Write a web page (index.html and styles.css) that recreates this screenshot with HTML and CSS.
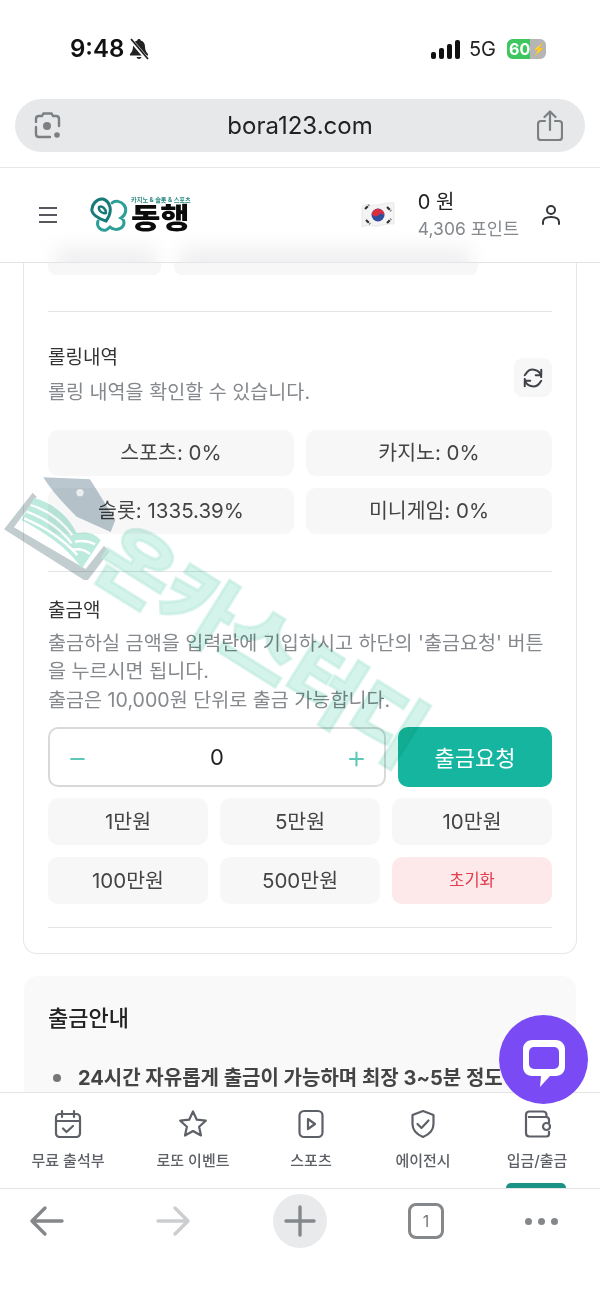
FILE: index.html
```html
<!DOCTYPE html>
<html lang="ko">
<head>
  <meta charset="UTF-8">
  <meta name="viewport" content="width=device-width, initial-scale=1.0">
  <title>동행 - 출금</title>
  <link rel="stylesheet" href="styles.css">
</head>
<body>
  <div class="phone">
    <div class="status-bar">
      <div class="status-left">
        <span class="clock">9:48</span>
        <svg class="bell" width="22" height="24" viewBox="0 0 22 24"><path d="M11 2c-1 0-1.600.7-1.700 1.600C6.500 4.400 5 6.700 5 9.500c0 3.500-1 5.500-3 7.500v1.500h18V17c-2-2-3-4-3-7.500 0-2.800-1.500-5.100-4.300-5.900C12.600 2.700 12 2 11 2zM8.500 20a2.600 2.600 0 0 0 5 0z" fill="#222"/><path d="M2 2l18 21" stroke="#fff" stroke-width="4"/><path d="M3 2l17 20" stroke="#222" stroke-width="1.800"/></svg>
      </div>
      <div class="status-right">
        <div class="signal"><i class="s1"></i><i class="s2"></i><i class="s3"></i><i class="s4"></i></div>
        <span class="net">5G</span>
        <div class="battery"><span class="battery-fill">60</span><span class="battery-rest">⚡</span></div>
      </div>
    </div>

    <div class="url-wrap">
      <div class="url-pill">
        <svg width="30" height="30" viewBox="0 0 30 30" fill="none" stroke="#7d8083" stroke-width="2.400" stroke-linecap="round"><path d="M3 11V8c0-2 1-3 3-3h3l1.500-2.500h8L20 5h3c2 0 3 1 3 3v7"/><path d="M3 16v7c0 2 1 3 3 3h11"/><circle cx="14" cy="15" r="4" fill="#7d8083" stroke="none"/><circle cx="24" cy="24" r="2.800" fill="#7d8083" stroke="none"/></svg>
        <span class="url-text">bora123.com</span>
        <svg width="26" height="32" viewBox="0 0 26 32" fill="none" stroke="#7d8083" stroke-width="2.200" stroke-linecap="round" stroke-linejoin="round"><path d="M8 11H4c-1.500 0-3 1-3 3v13c0 2 1.500 3 3 3h18c1.500 0 3-1 3-3V14c0-2-1.500-3-3-3h-4"/><path d="M13 20V2M7.500 7L13 1.500 18.500 7"/></svg>
      </div>
    </div>

    <header class="site-header">
      <div class="header-blur blur-a"></div>
      <div class="header-blur blur-b"></div>
      <div class="menu-btn"><i></i><i></i><i></i></div>
      <div class="logo">
        <svg class="logo-mark" width="38" height="36" viewBox="0 0 38 36" fill="none"><path d="M8 24c-2 6 3 10 8 9 2-1 3-2 4-3 3 3 8 3 11 1 4-3 4-8 0-10 5-3 6-9 3-13-3-4-9-5-12-2" stroke="#2c9f99" stroke-width="3" stroke-linecap="round"/><path d="M13 2c3 1 6 4 7 8 1 5-1 10-4 14C10 22 3 19 2 14 1 8 7 1 13 2z" stroke="#157a78" stroke-width="3" fill="#fff"/><path d="M9 10c3-2 7 2 7 6-3 1-8-2-7-6z" stroke="#157a78" stroke-width="2.400"/></svg>
        <div class="logo-words">
          <span class="logo-small">카지노 &amp; 슬롯 &amp; 스포츠</span>
          <span class="logo-big">동행</span>
        </div>
      </div>
      <div class="header-right">
        <svg class="flag" width="34" height="28" viewBox="0 0 34 28"><path d="M1 5c6-3 11 0 16-1s10-3 16-2v21c-6-1-11 1-16 2s-10-2-16 1z" fill="#f4f4f4" stroke="#ddd" stroke-width=".6"/><circle cx="17" cy="14" r="6.500" fill="#2f4e9e"/><path d="M10.600 13c1-4 5-6 8-5s5 3 4.500 6c-2-2-4-2-5.500 0s-5 2-7-1z" fill="#d8303f"/><g stroke="#333" stroke-width="2.200" stroke-dasharray="4 1"><path d="M4 8l4-4M26 6l4 4M5 19l4 4M26 22l4-4"/></g></svg>
        <div class="balance">
          <span class="money">0 원</span>
          <span class="points">4,306 포인트</span>
        </div>
        <svg class="user" width="20" height="22" viewBox="0 0 20 22" fill="none" stroke="#33363a" stroke-width="2"><circle cx="10" cy="6" r="4"/><path d="M2 20v-2c0-3 3-5 8-5s8 2 8 5v2" stroke-linecap="round"/></svg>
      </div>
    </header>

    <main class="content">
      <section class="card">
        <div class="stub-row">
          <div class="stub stub-a"></div>
          <div class="stub stub-b"></div>
        </div>
        <hr class="rule first-rule">

        <div class="rolling-head">
          <div>
            <h3 class="label">롤링내역</h3>
            <p class="muted">롤링 내역을 확인할 수 있습니다.</p>
          </div>
          <button class="refresh">
            <svg width="22" height="22" viewBox="0 0 24 24" fill="none" stroke="#3f4347" stroke-width="2.200" stroke-linecap="round" stroke-linejoin="round"><path d="M21 11a9 9 0 0 0-16.500-4L3 9"/><path d="M21 3v6h-6" /><path d="M3 13a9 9 0 0 0 16.500 4l1.500-2"/><path d="M3 21v-6h6"/></svg>
          </button>
        </div>
        <div class="rolling-grid">
          <div class="chip">스포츠: 0%</div>
          <div class="chip">카지노: 0%</div>
          <div class="chip">슬롯: 1335.39%</div>
          <div class="chip">미니게임: 0%</div>
        </div>
        <hr class="rule second-rule">

        <h3 class="label">출금액</h3>
        <p class="muted amount-note">출금하실 금액을 입력란에 기입하시고 하단의 '출금요청' 버튼을 누르시면 됩니다.<br>출금은 10,000원 단위로 출금 가능합니다.</p>
        <div class="amount-row">
          <div class="stepper">
            <span class="step">−</span>
            <span class="amount">0</span>
            <span class="step">+</span>
          </div>
          <button class="submit">출금요청</button>
        </div>
        <div class="quick-grid">
          <button class="quick">1만원</button>
          <button class="quick">5만원</button>
          <button class="quick">10만원</button>
          <button class="quick">100만원</button>
          <button class="quick">500만원</button>
          <button class="quick reset">초기화</button>
        </div>
        <hr class="rule third-rule">
      </section>

      <section class="info">
        <h3 class="info-title">출금안내</h3>
        <ul class="info-list">
          <li>24시간 자유롭게 출금이 가능하며 최장 3~5분 정도</li>
        </ul>
      </section>
    </main>

    <nav class="tabs">
      <a class="tab">
        <svg width="28" height="30" viewBox="0 0 28 30" fill="none" stroke="#5d6167" stroke-width="2.200" stroke-linecap="round" stroke-linejoin="round"><rect x="2" y="5" width="24" height="23" rx="3.500"/><path d="M2 12h24M8 2v6M20 2v6M9 19.500l3.500 3.500 6.500-6"/></svg>
        <span>무료 출석부</span>
      </a>
      <a class="tab">
        <svg width="30" height="30" viewBox="0 0 30 30" fill="none" stroke="#5d6167" stroke-width="2.200" stroke-linejoin="round"><path d="M15 2.500l3.800 8.200 9 1-6.700 6 1.900 8.800L15 22l-8 4.500 1.900-8.800-6.700-6 9-1z"/></svg>
        <span>로또 이벤트</span>
      </a>
      <a class="tab">
        <svg width="26" height="30" viewBox="0 0 26 30" fill="none" stroke="#5d6167" stroke-width="2.200" stroke-linejoin="round"><rect x="1.500" y="2" width="23" height="26" rx="4.500"/><path d="M10 10l7 5-7 5z"/></svg>
        <span>스포츠</span>
      </a>
      <a class="tab">
        <svg width="26" height="30" viewBox="0 0 26 30" fill="none" stroke="#5d6167" stroke-width="2.200" stroke-linecap="round" stroke-linejoin="round"><path d="M13 2l10.500 4v9c0 6.500-4.500 10.500-10.500 13C7 25.500 2.500 21.500 2.500 15V6z"/><path d="M7.500 15l4 4 7-7.500"/></svg>
        <span>에이전시</span>
      </a>
      <a class="tab">
        <svg width="28" height="30" viewBox="0 0 28 30" fill="none" stroke="#5d6167" stroke-width="2.200" stroke-linejoin="round"><path d="M3 8V6c0-2 1.500-3.500 3.500-3.500H20c2 0 3.500 1.500 3.500 3.500v2"/><path d="M3 7v17c0 2 1.500 3.500 3.500 3.500h17c1.500 0 2.500-1 2.500-2.500v-3M26 14v-3c0-2-1-3-3-3H5"/><rect x="20" y="14" width="7" height="7" rx="3.500"/></svg>
        <span>입금/출금</span>
        <i class="tab-mark"></i>
      </a>
    </nav>

    <div class="toolbar">
      <svg width="36" height="32" viewBox="0 0 36 32" fill="none" stroke="#85888a" stroke-width="3.400" stroke-linecap="round" stroke-linejoin="round"><path d="M33 16H3M16 3L3 16l13 13"/></svg>
      <svg width="36" height="32" viewBox="0 0 36 32" fill="none" stroke="#cbcdcf" stroke-width="3.400" stroke-linecap="round" stroke-linejoin="round"><path d="M3 16h30M20 3l13 13-13 13"/></svg>
      <div class="new-tab"><svg width="32" height="32" viewBox="0 0 32 32" stroke="#85888a" stroke-width="3.400" stroke-linecap="round"><path d="M16 2v28M2 16h28"/></svg></div>
      <div class="tab-count">1</div>
      <div class="more"><i></i><i></i><i></i></div>
    </div>

    <div class="watermark" aria-hidden="true">
      <svg class="wm-mark" width="130" height="110" viewBox="0 0 390 330">
        <path d="M12 178L98 68l12 12-68 92 215 125 55-70 16 18-68 90z" fill="#bcc8ca"/>
        <path d="M64 150L102 84c55 15 100 50 128 105 30-5 55 0 72 22l-56 84C200 230 130 185 64 150z" fill="#b5e8d9"/>
        <path d="M80 125c55 20 100 50 135 95M92 105c50 15 95 50 125 90M72 145c60 25 115 60 160 110M225 215c25-5 45 0 60 8M215 240c20-5 40 0 55 12" fill="none" stroke="#fff" stroke-width="7"/>
        <path d="M130 22l140 6 76 122-14 36-102-46c-30-30-70-70-100-118z" fill="#b4c1c9"/>
        <circle cx="240" cy="68" r="11" fill="#f2f4f5"/>
      </svg>
      <span class="wm-text">온카스터디</span>
    </div>

    <button class="chat-fab">
      <svg width="46" height="50" viewBox="0 0 46 50"><path d="M11 2h24c5 0 9 4 9 9v18c0 5-4 9-9 9h-6l-10 11 1-11h-9c-5 0-9-4-9-9V11c0-5 4-9 9-9z" fill="#fff"/><rect x="8" y="9" width="30" height="22" rx="5" fill="#7a4bf4"/></svg>
    </button>
  </div>
</body>
</html>
```

FILE: styles.css
```css
* { box-sizing: border-box; }
body { margin: 0; background: #fff; font-family: Inter, "Noto Sans CJK KR", sans-serif; color: #333; }
button { font-family: inherit; border: none; cursor: pointer; }
h3, p, ul { margin: 0; }

.phone { width: 600px; height: 1304px; position: relative; overflow: hidden; display: flex; flex-direction: column; }

/* status bar */
.status-bar { height: 98px; flex: none; display: flex; justify-content: space-between; align-items: flex-start; padding: 35px 54px 0 70px; }
.status-left { display: flex; align-items: center; gap: 4px; }
.clock { font-size: 24px; font-weight: 600; color: #111; line-height: 28px; }
.status-right { display: flex; align-items: center; gap: 9px; height: 28px; }
.signal { display: flex; align-items: flex-end; gap: 3px; height: 19px; }
.signal i { width: 5px; background: #111; border-radius: 2px; }
.s1 { height: 7px; } .s2 { height: 11px; } .s3 { height: 15px; } .s4 { height: 19px; }
.net { font-size: 20px; color: #222; margin-right: 2px; }
.battery { width: 39px; height: 20px; border-radius: 6px; overflow: hidden; display: flex; background: #b5b5b5; font-size: 16px; font-weight: 700; color: #fff; line-height: 20px; }
.battery-fill { width: 23px; background: #3ec65f; padding-left: 2px; }
.battery-rest { font-size: 11px; padding-left: 2px; }

/* browser url bar */
.url-wrap { height: 70px; flex: none; padding: 1px 15px 0; border-bottom: 1px solid #e8e8ea; }
.url-pill { height: 53px; background: #e6e8ea; border-radius: 27px; display: flex; align-items: center; justify-content: space-between; padding: 0 22px 0 18px; }
.url-text { font-size: 24px; color: #222; }

/* site header */
.site-header { height: 95px; flex: none; display: flex; align-items: center; padding: 0 39px; border-bottom: 1px solid #e4e4e6; background: #fff; position: relative; overflow: hidden; }
.header-blur { position: absolute; bottom: -20px; height: 34px; background: #efeff1; filter: blur(10px); }
.blur-a { left: 56px; width: 100px; }
.blur-b { left: 180px; width: 290px; }
.menu-btn { width: 18px; display: flex; flex-direction: column; gap: 5px; position: relative; }
.menu-btn i { height: 2px; background: #55585c; }
.logo { display: flex; align-items: center; gap: 3px; margin-left: 33px; position: relative; }
.logo-words { display: flex; flex-direction: column; align-items: flex-start; }
.logo-small { font-size: 6.200px; line-height: 8px; color: #2a8a80; font-weight: 700; white-space: nowrap; }
.logo-big { font-size: 29px; line-height: 30px; font-weight: 900; color: #0b0b0b; transform: scaleX(1.100); transform-origin: 0 50%; }
.header-right { margin-left: auto; display: flex; align-items: center; position: relative; }
.flag { margin-right: 23px; }
.balance { display: flex; flex-direction: column; margin-right: 22px; }
.money { font-size: 20px; line-height: 28px; color: #222; }
.points { font-size: 17.500px; line-height: 26px; color: #85888c; }

/* main */
.content { flex: 1; min-height: 0; overflow: hidden; padding: 0 23px; }
.card { border: 1px solid #e6e6e8; border-top: none; border-radius: 0 0 14px 14px; padding: 0 24px 25px; }
.stub-row { display: flex; gap: 13px; height: 12px; }
.stub { background: #f7f7f8; border-radius: 0 0 8px 8px; }
.stub-a { width: 113px; }
.stub-b { width: 304px; }
.rule { border: none; border-top: 1px solid #e4e4e6; margin: 0; }
.first-rule { margin: 36px 0 0; }
.rolling-head { display: flex; justify-content: space-between; margin-top: 32px; }
.label { font-size: 19px; line-height: 28px; font-weight: 400; color: #333; }
.muted { font-size: 19.600px; line-height: 28.500px; color: #85888c; margin-top: 6px; }
.refresh { width: 38px; height: 39px; background: #f7f7f8; border-radius: 9px; margin-top: 14px; display: flex; align-items: center; justify-content: center; padding: 0; }
.rolling-grid { display: grid; grid-template-columns: 1fr 1fr; gap: 12px; margin-top: 23px; }
.chip { height: 46px; padding-bottom: 3px; background: #f7f7f8; border-radius: 10px; display: flex; align-items: center; justify-content: center; font-size: 20.500px; color: #444; }
.second-rule { margin: 37px 0 25px; }
.amount-note { margin-top: 4px; word-break: break-all; }
.amount-row { display: flex; gap: 12px; margin-top: 13px; }
.stepper { flex: 1; height: 60px; border: 2px solid #d9d9db; border-radius: 10px; background: #fff; display: flex; align-items: center; justify-content: space-between; padding: 0 17px; }
.step { font-size: 32px; line-height: 32px; font-weight: 300; color: #5cc8b8; }
.amount { font-size: 22px; color: #222; }
.submit { width: 154px; height: 60px; padding: 0 0 3px; background: #15b5a0; border-radius: 10px; color: #fff; font-size: 22px; }
.quick-grid { display: grid; grid-template-columns: repeat(3, 1fr); gap: 12px; margin-top: 11px; }
.quick { height: 47px; padding: 0 0 3px; background: #f7f7f8; border-radius: 10px; font-size: 20.500px; color: #444; }
.reset { background: #fde9ea; color: #e23d4c; font-size: 16.500px; }
.third-rule { margin: 23px 0 0; }

.info { margin-top: 22px; margin-left: 1px; margin-right: 1px; background: #f9f9fa; border-radius: 14px; padding: 24px; }
.info-title { font-size: 22px; line-height: 36px; font-weight: 500; color: #222; }
.info-list { margin-top: 27px; padding-left: 5px; list-style: none; }
.info-list li { display: flex; align-items: center; gap: 17px; font-size: 20px; line-height: 30px; font-weight: 700; color: #444; white-space: nowrap; }
.info-list li::before { content: ""; flex: none; width: 8px; height: 8px; border-radius: 50%; background: #777; }

/* bottom tabs */
.tabs { height: 96px; flex: none; display: grid; grid-template-columns: 136px 114px 122px 102px 126px; border-top: 1px solid #e4e4e6; background: #fff; }
.tab { display: flex; flex-direction: column; align-items: center; padding-top: 16px; gap: 10px; font-size: 15px; font-weight: 500; color: #5d6167; position: relative; white-space: nowrap; }
.tab-mark { position: absolute; bottom: 0; left: 32px; width: 60px; height: 5px; background: #1a9384; border-radius: 5px 5px 0 0; }

/* browser toolbar */
.toolbar { height: 116px; flex: none; border-top: 1px solid #e4e4e6; display: grid; grid-template-columns: 94px 158px 96px 156px 74px; justify-items: center; align-items: start; padding-top: 5px; }
.toolbar > svg { margin-top: 11px; }
.new-tab { width: 54px; height: 54px; border-radius: 50%; background: #e9eaec; display: flex; align-items: center; justify-content: center; }
.tab-count { width: 36px; height: 36px; margin-top: 9px; border: 3px solid #85888a; border-radius: 8px; display: flex; align-items: center; justify-content: center; font-size: 16px; color: #777; }
.more { display: flex; gap: 6px; margin-top: 24px; }
.more i { width: 7px; height: 7px; border-radius: 50%; background: #85888a; }

/* things lying over the page */
.watermark { position: absolute; left: 0; top: 470px; width: 460px; height: 290px; pointer-events: none; mix-blend-mode: multiply; }
.wm-mark { position: absolute; left: 0; top: 0; opacity: .9; }
.wm-text { position: absolute; left: 105px; top: 38px; font-size: 80px; line-height: 80px; font-weight: 900; white-space: nowrap; color: rgba(170, 232, 214, .5); -webkit-text-stroke: 3px rgba(190, 235, 222, .6); transform: rotate(32deg); transform-origin: 0 40px; }
.chat-fab { position: absolute; left: 499px; top: 1015px; width: 89px; height: 89px; border-radius: 50%; background: #7a4bf4; display: flex; align-items: center; justify-content: center; padding: 6px 0 0; }
```
